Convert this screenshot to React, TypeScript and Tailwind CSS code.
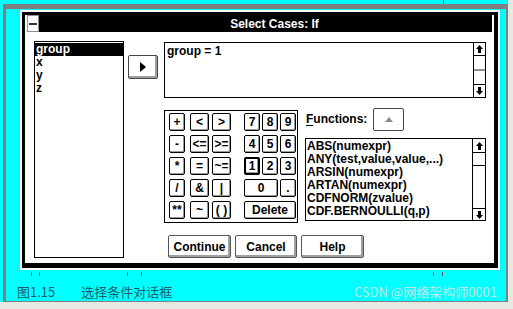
import React from 'react'

const ui = "font-['Liberation_Sans_Narrow','Liberation_Sans',Arial,sans-serif] font-bold"
const cjk = "font-['Noto_Sans_CJK_SC','Noto_Sans',sans-serif]"

function UpArrow() {
  return (
    <svg width="7" height="8" viewBox="0 0 7 8">
      <path d="M3.5 0 L7 4 H5 V8 H2 V4 H0 Z" fill="black" />
    </svg>
  )
}

function DownArrow() {
  return (
    <svg width="7" height="8" viewBox="0 0 7 8">
      <path d="M3.5 8 L7 4 H5 V0 H2 V4 H0 Z" fill="black" />
    </svg>
  )
}

function Key({ children, className = '' }: { children: React.ReactNode; className?: string }) {
  return (
    <div
      className={`h-[18px] flex items-center justify-center border border-black rounded-[2px] bg-white shadow-[inset_-1px_-1px_0_#9a9a9a] text-[12px] leading-none ${className}`}
    >
      {children}
    </div>
  )
}

function PushButton({ children, className = '' }: { children: React.ReactNode; className?: string }) {
  return (
    <div
      className={`h-[23px] flex items-center justify-center border border-[#555] rounded-[2px] bg-white shadow-[inset_-2px_-2px_0_#a0a0a0] text-[12px] ${className}`}
    >
      {children}
    </div>
  )
}

const functions = [
  'ABS(numexpr)',
  'ANY(test,value,value,...)',
  'ARSIN(numexpr)',
  'ARTAN(numexpr)',
  'CDFNORM(zvalue)',
  'CDF.BERNOULLI(q,p)',
]

export default function App() {
  return (
    <div className={`w-[513px] h-[309px] bg-[#e8e8e3] overflow-hidden relative ${ui}`}>
      <div className="h-[302px] w-[508px] bg-[#00ffff] pt-[4px] pl-[3px]">
        <div className="h-[298px] border-t-[5px] border-l-[3px] border-r-[2px] border-b border-[#808080] pt-[1px] flex flex-col">
          {/* Dialog */}
          <div className="ml-[14px] w-[480px] h-[262px] bg-white p-[2px]">
            <div className="h-full border-[3px] border-r-[4px] border-b-[5px] border-black bg-white px-[2px] flex flex-col">
              {/* Title bar */}
              <div className="h-[17px] flex">
                <div className="w-[12px] h-full bg-white border border-[#909090] flex items-center justify-center">
                  <div className="w-[8px] h-[2px] bg-[#333]" />
                </div>
                <div className="flex-1 bg-black text-white text-[12px] flex items-center justify-center pl-[18px]">
                  Select Cases: If
                </div>
              </div>

              {/* Body */}
              <div className="flex pl-[7px] pt-[9px] text-[12px] text-black">
                {/* Variable list */}
                <div className="w-[90px] h-[217px] border border-black pt-[1px] leading-[13px]">
                  <div className="bg-black text-white pl-[1px]">group</div>
                  <div className="pl-[1px]">x</div>
                  <div className="pl-[1px]">y</div>
                  <div className="pl-[1px]">z</div>
                </div>

                {/* Transfer button */}
                <div className="ml-[4px] mt-[14px] w-[30px] h-[24px] border border-[#444] rounded-[2px] shadow-[inset_-2px_-2px_0_#a0a0a0] flex items-center justify-center">
                  <svg width="6" height="10" viewBox="0 0 6 10">
                    <path d="M0 0 L6 5 L0 10 Z" fill="black" />
                  </svg>
                </div>

                {/* Right side */}
                <div className="ml-[6px] w-[322px] pt-[1px] flex flex-col">
                  {/* Expression box */}
                  <div className="h-[56px] border border-black flex">
                    <div className="flex-1 pl-[2px] pt-[2px] leading-[13px]">group = 1</div>
                    <div className="w-[12px] border-l border-black flex flex-col">
                      <div className="h-[13px] border-b border-black flex items-center justify-center">
                        <UpArrow />
                      </div>
                      <div className="flex-1 flex flex-col justify-center">
                        <div className="h-[2px] bg-[#909090]" />
                      </div>
                      <div className="h-[13px] border-t border-black flex items-center justify-center">
                        <DownArrow />
                      </div>
                    </div>
                  </div>

                  <div className="flex mt-[9px]">
                    {/* Calculator pad */}
                    <div className="mt-[3px] w-[134px] h-[113px] border border-black pl-[4px] pt-[2px] flex flex-col gap-[4px]">
                      <div className="flex">
                        <Key className="w-[16px]">+</Key>
                        <Key className="w-[19px] ml-[5px]">&lt;</Key>
                        <Key className="w-[19px] ml-[3px]">&gt;</Key>
                        <Key className="w-[16px] ml-[13px]">7</Key>
                        <Key className="w-[16px] ml-[2px]">8</Key>
                        <Key className="w-[16px] ml-[2px]">9</Key>
                      </div>
                      <div className="flex">
                        <Key className="w-[16px]">-</Key>
                        <Key className="w-[19px] ml-[5px]">&lt;=</Key>
                        <Key className="w-[19px] ml-[3px]">&gt;=</Key>
                        <Key className="w-[16px] ml-[13px]">4</Key>
                        <Key className="w-[16px] ml-[2px]">5</Key>
                        <Key className="w-[16px] ml-[2px]">6</Key>
                      </div>
                      <div className="flex">
                        <Key className="w-[16px]">*</Key>
                        <Key className="w-[19px] ml-[5px]">=</Key>
                        <Key className="w-[19px] ml-[3px]">~=</Key>
                        <Key className="w-[16px] ml-[13px] border-2">1</Key>
                        <Key className="w-[16px] ml-[2px]">2</Key>
                        <Key className="w-[16px] ml-[2px]">3</Key>
                      </div>
                      <div className="flex">
                        <Key className="w-[16px]">/</Key>
                        <Key className="w-[19px] ml-[5px]">&amp;</Key>
                        <Key className="w-[19px] ml-[3px]">|</Key>
                        <Key className="w-[34px] ml-[13px]">0</Key>
                        <Key className="w-[16px] ml-[2px]">.</Key>
                      </div>
                      <div className="flex">
                        <Key className="w-[16px]">**</Key>
                        <Key className="w-[19px] ml-[5px]">~</Key>
                        <Key className="w-[19px] ml-[3px]">( )</Key>
                        <Key className="w-[52px] ml-[13px]">Delete</Key>
                      </div>
                    </div>

                    {/* Functions */}
                    <div className="ml-[7px] w-[181px] flex flex-col">
                      <div className="h-[24px] flex items-center">
                        <span className="w-[68px] pl-[1px]">
                          <span className="underline underline-offset-2">F</span>unctions:
                        </span>
                        <div className="w-[31px] h-[23px] border border-[#444] rounded-[2px] flex items-center justify-center">
                          <svg width="8" height="5" viewBox="0 0 8 5">
                            <path d="M4 0 L8 5 H0 Z" fill="#8a8a8a" />
                          </svg>
                        </div>
                      </div>
                      <div className="mt-[7px] h-[83px] border border-black flex">
                        <div className="flex-1 pl-[1px] pt-[1px] leading-[13px]">
                          {functions.map((f) => (
                            <div key={f} className="whitespace-nowrap">{f}</div>
                          ))}
                        </div>
                        <div className="w-[13px] border-l border-black flex flex-col">
                          <div className="h-[14px] border-b border-black flex items-center justify-center">
                            <UpArrow />
                          </div>
                          <div className="h-[13px] border-b border-black" />
                          <div className="flex-1" />
                          <div className="h-[12px] border-t border-black flex items-center justify-center">
                            <DownArrow />
                          </div>
                        </div>
                      </div>
                    </div>
                  </div>

                  {/* Bottom buttons */}
                  <div className="flex mt-[12px] ml-[4px]">
                    <PushButton className="w-[63px]">Continue</PushButton>
                    <PushButton className="w-[62px] ml-[4px]">Cancel</PushButton>
                    <PushButton className="w-[63px] ml-[4px]">Help</PushButton>
                  </div>
                </div>
              </div>
            </div>
          </div>

          {/* Caption */}
          <div className={`mt-[12px] ml-[11px] mr-[9px] flex items-center justify-between font-normal ${cjk}`}>
            <span className="text-[13px] text-[#1d5c6b]">图1.15　　选择条件对话框</span>
            <span className="text-[13px] text-[#c4e8e8]">CSDN @网络架构师0001</span>
          </div>
        </div>
      </div>

      {/* bits of the windows behind the dialog */}
      <div className="absolute left-[443px] top-0 w-px h-[4px] bg-[#555]" />
      <div className="absolute left-[31px] top-[272px] w-px h-[4px] bg-[#555]" />
      <div className="absolute left-[39px] top-[272px] w-px h-[4px] bg-[#555]" />
      <div className="absolute left-[127px] top-[272px] w-px h-[4px] bg-[#555]" />
      <div className="absolute left-[141px] top-[272px] w-px h-[4px] bg-[#555]" />
      <div className="absolute left-[433px] top-[272px] w-px h-[4px] bg-[#555]" />
      <div className="absolute left-[442px] top-[272px] w-px h-[4px] bg-[#555]" />
    </div>
  )
}
